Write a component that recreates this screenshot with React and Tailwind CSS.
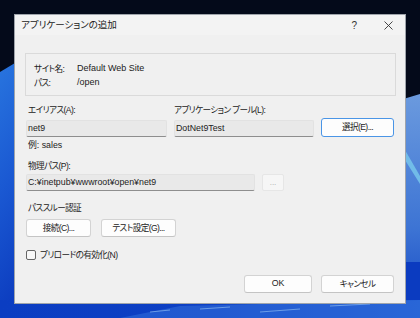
const FONT = "font-['Liberation_Sans','Noto_Sans_CJK_JP',sans-serif] [font-feature-settings:'palt']"
const JP = 'text-[8.6px] tracking-[-0.6px]'

function Wallpaper() {
  return (
    <svg className="absolute inset-0" width="420" height="318" viewBox="0 0 420 318">
      <defs>
        <linearGradient id="lb" x1="0" y1="0" x2="0.3" y2="1">
          <stop offset="0" stopColor="#2a78e0" />
          <stop offset="0.5" stopColor="#1a58d2" />
          <stop offset="1" stopColor="#0a38bc" />
        </linearGradient>
        <linearGradient id="rb" x1="0" y1="0" x2="0" y2="1">
          <stop offset="0" stopColor="#6b9ade" />
          <stop offset="0.6" stopColor="#3d74d4" />
          <stop offset="1" stopColor="#1246c4" />
        </linearGradient>
        <linearGradient id="bb" x1="0" y1="0" x2="1" y2="0">
          <stop offset="0" stopColor="#0b3dc2" />
          <stop offset="0.5" stopColor="#0d40c4" />
          <stop offset="1" stopColor="#1a56d0" />
        </linearGradient>
      </defs>
      <rect width="420" height="318" fill="#040a1a" />
      <path d="M0 72 L20 60 L60 46 L60 318 L0 318 Z" fill="url(#lb)" />
      <path d="M400 100 L420 94 L420 318 L400 318 Z" fill="url(#rb)" />
      <path d="M405 150 L420 176 L420 184 L405 160 Z" fill="#7fd3f0" opacity="0.7" />
      <rect x="400" y="262" width="20" height="56" fill="#0b3bc0" />
      <rect x="0" y="300" width="420" height="18" fill="url(#bb)" />
      <path d="M120 318 L180 306 L260 304 L420 300 L420 318 Z" fill="#3b7be0" opacity="0.45" />
      <path d="M150 312 L170 310 M200 309 L230 307 M260 312 L300 309 M330 306 L370 304" stroke="#9cc8f5" strokeWidth="1" opacity="0.6" />
    </svg>
  )
}

function Btn({ children, className = '', focused = false, jp = false }) {
  return (
    <div
      className={`flex items-center justify-center rounded-[3px] bg-[#fdfdfd] text-[#222] ${jp ? JP : 'text-[8.8px]'} ${
        focused ? 'border border-[#4a95e6]' : 'border border-[#d3d3d3] border-b-[#c4c4c4]'
      } ${className}`}
    >
      {children}
    </div>
  )
}

function Field({ value, className = '' }) {
  return (
    <div className={`flex h-[17px] items-center rounded-[2px] border border-[#e2e2e2] border-b-[#8e8e8e] bg-[#e9e9e9] pl-[1px] text-[8.8px] text-[#222] ${className}`}>
      {value}
    </div>
  )
}

export default function App() {
  return (
    <div className={`relative h-[318px] w-[420px] overflow-hidden ${FONT}`}>
      <Wallpaper />
      <div className="relative pl-[14px] pt-[14px]">
        <div className="flex h-[290px] w-[392px] flex-col border border-[#9fa4ab] bg-[#f0f0f0] text-[#222]">
          {/* タイトルバー */}
          <div className="flex h-[20px] items-center bg-[#f3f3f3] pl-[6px] text-[9.5px]">
            <span>アプリケーションの追加</span>
            <span className="ml-auto mr-[27px] text-[10px] text-[#333]">?</span>
            <svg className="mr-[12px]" width="9" height="9" viewBox="0 0 9 9">
              <path d="M0.5 0.5 L8.5 8.5 M8.5 0.5 L0.5 8.5" stroke="#333" strokeWidth="0.9" />
            </svg>
          </div>

          <div className="flex flex-col pl-[10px] pr-[10px]">
            {/* サイト情報 */}
            <div className="mt-[18px] flex h-[43px] w-[371px] flex-col border border-[#dadada] pl-[8px] pt-[8px] text-[9px]">
              <div className="flex h-[14px] items-center">
                <span className={`w-[43px] ${JP}`}>サイト名:</span>
                <span>Default Web Site</span>
              </div>
              <div className="flex h-[14px] items-center">
                <span className={`w-[43px] ${JP}`}>パス:</span>
                <span>/open</span>
              </div>
            </div>

            <div className="flex flex-col pl-[1px] text-[8.8px]">
              <div className={`mt-[8px] flex h-[12px] items-center ${JP}`}>
                <span className="w-[148px] pl-[2px]">エイリアス(A):</span>
                <span>アプリケーション プール(L):</span>
              </div>
              <div className="mt-[2px] flex h-[19px] items-end">
                <Field value="net9" className="w-[141px]" />
                <Field value="DotNet9Test" className="ml-[7px] w-[140px]" />
                <Btn focused jp className="ml-[7px] h-[19px] w-[73px]">選択(E)...</Btn>
              </div>
              <div className="mt-[3px] flex h-[12px] items-center pl-[2px]">例: sales</div>
              <div className={`mt-[8px] flex h-[12px] items-center pl-[2px] ${JP}`}>物理パス(P):</div>
              <div className="mt-[2px] flex h-[17px] items-center">
                <Field value="C:¥inetpub¥wwwroot¥open¥net9" className="w-[229px]" />
                <div className="ml-[7px] flex h-[17px] w-[22px] items-center justify-center rounded-[2px] border border-[#e6e6e6] bg-[#f6f6f6] text-[8px] text-[#a8a8a8]">...</div>
              </div>
              <div className={`mt-[11px] flex h-[12px] items-center pl-[2px] ${JP}`}>パススルー認証</div>
              <div className="mt-[5px] flex h-[18px]">
                <Btn jp className="h-[18px] w-[65px]">接続(C)...</Btn>
                <Btn jp className="ml-[10px] h-[18px] w-[75px]">テスト設定(G)...</Btn>
              </div>
              <div className="mt-[12px] flex h-[12px] items-center">
                <div className="h-[10px] w-[10px] rounded-[2px] border border-[#666] bg-[#f8f8f8]" />
                <span className={`ml-[4px] ${JP}`}>プリロードの有効化(N)</span>
              </div>
              <div className="mt-[14px] flex h-[18px] justify-end pr-[1px]">
                <Btn className="h-[18px] w-[68px]">OK</Btn>
                <Btn jp className="ml-[9px] h-[18px] w-[73px]">キャンセル</Btn>
              </div>
            </div>
          </div>
        </div>
      </div>
    </div>
  )
}
